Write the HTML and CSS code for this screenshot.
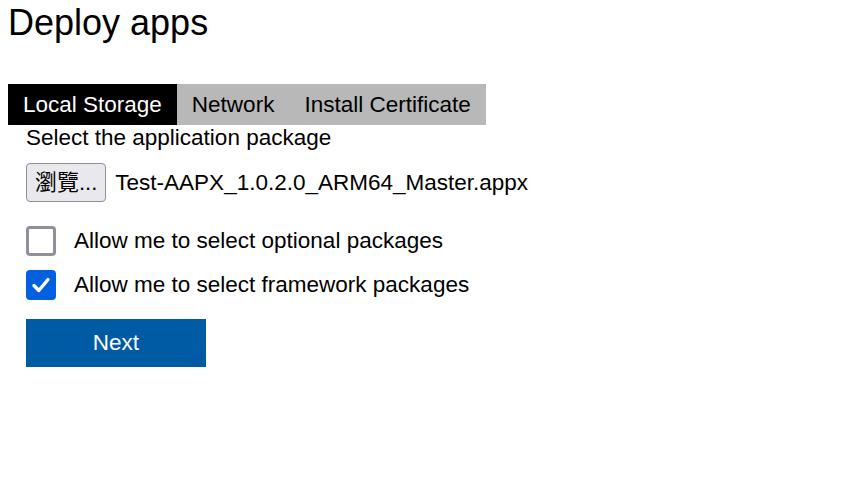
FILE: index.html
```html
<!DOCTYPE html>
<html lang="en">

<head>
    <meta charset="UTF-8">
    <meta name="viewport" content="width=device-width, initial-scale=1.0">
    <title>Deploy apps</title>
    <link rel="stylesheet" href="styles.css">
</head>

<body>
    <h1>Deploy apps</h1>

    <div class="tabs">
        <span class="tab active">Local Storage</span>
        <span class="tab">Network</span>
        <span class="tab">Install Certificate</span>
    </div>

    <div class="tab-content">
        <div class="label">Select the application package</div>

        <div class="file-row">
            <button class="browse-btn" type="button">瀏覽...</button>
            <span class="file-name">Test-AAPX_1.0.2.0_ARM64_Master.appx</span>
        </div>

        <label class="check-row">
            <span class="check"></span>
            Allow me to select optional packages
        </label>
        <label class="check-row">
            <span class="check checked">
                <svg viewBox="0 0 30 30" width="30" height="30">
                    <path d="M8 15.5 L12.8 20.5 L22 9.5" fill="none" stroke="#fff" stroke-width="3.4" stroke-linecap="round" stroke-linejoin="round" />
                </svg>
            </span>
            Allow me to select framework packages
        </label>

        <button class="next-btn" type="button">Next</button>
    </div>
</body>

</html>
```

FILE: styles.css
```css
body {
    font-family: "Liberation Sans", Arial, sans-serif;
    margin: 0 8px;
    background-color: #fff;
    color: #000;
}

h1 {
    font-size: 36px;
    font-weight: normal;
    margin: 2px 0 40px;
}

.tabs {
    display: flex;
    width: fit-content;
    background-color: #b8b8b8;
}

.tab {
    font-size: 22.5px;
    line-height: 25px;
    padding: 8px 15px;
    cursor: pointer;
}

.tab.active {
    background-color: #000;
    color: #fff;
}

.tab-content {
    padding-left: 18px;
    font-size: 22.5px;
}

.file-row {
    display: flex;
    align-items: center;
    gap: 9px;
    margin-top: 12px;
}

.browse-btn {
    font-family: "Liberation Sans", "Noto Sans CJK TC", sans-serif;
    font-size: 22px;
    line-height: 25px;
    padding: 6px 8px;
    background-color: #e9e9ed;
    border: 1px solid #8f8f9d;
    border-radius: 4px;
    color: #000;
}

.check-row {
    display: flex;
    align-items: center;
    gap: 18px;
    margin-top: 14px;
}

.file-row + .check-row {
    margin-top: 24px;
}

.check {
    box-sizing: border-box;
    width: 30px;
    height: 30px;
    border: 3px solid #8f8f9d;
    border-radius: 4px;
    background-color: #fff;
    flex-shrink: 0;
}

.check.checked {
    border: none;
    background-color: #0060df;
}

.check svg {
    display: block;
}

.next-btn {
    display: block;
    width: 180px;
    height: 48px;
    margin-top: 19px;
    border: none;
    background-color: #005ba4;
    color: #fff;
    font-family: "Liberation Sans", Arial, sans-serif;
    font-size: 22.5px;
    cursor: pointer;
}
```
